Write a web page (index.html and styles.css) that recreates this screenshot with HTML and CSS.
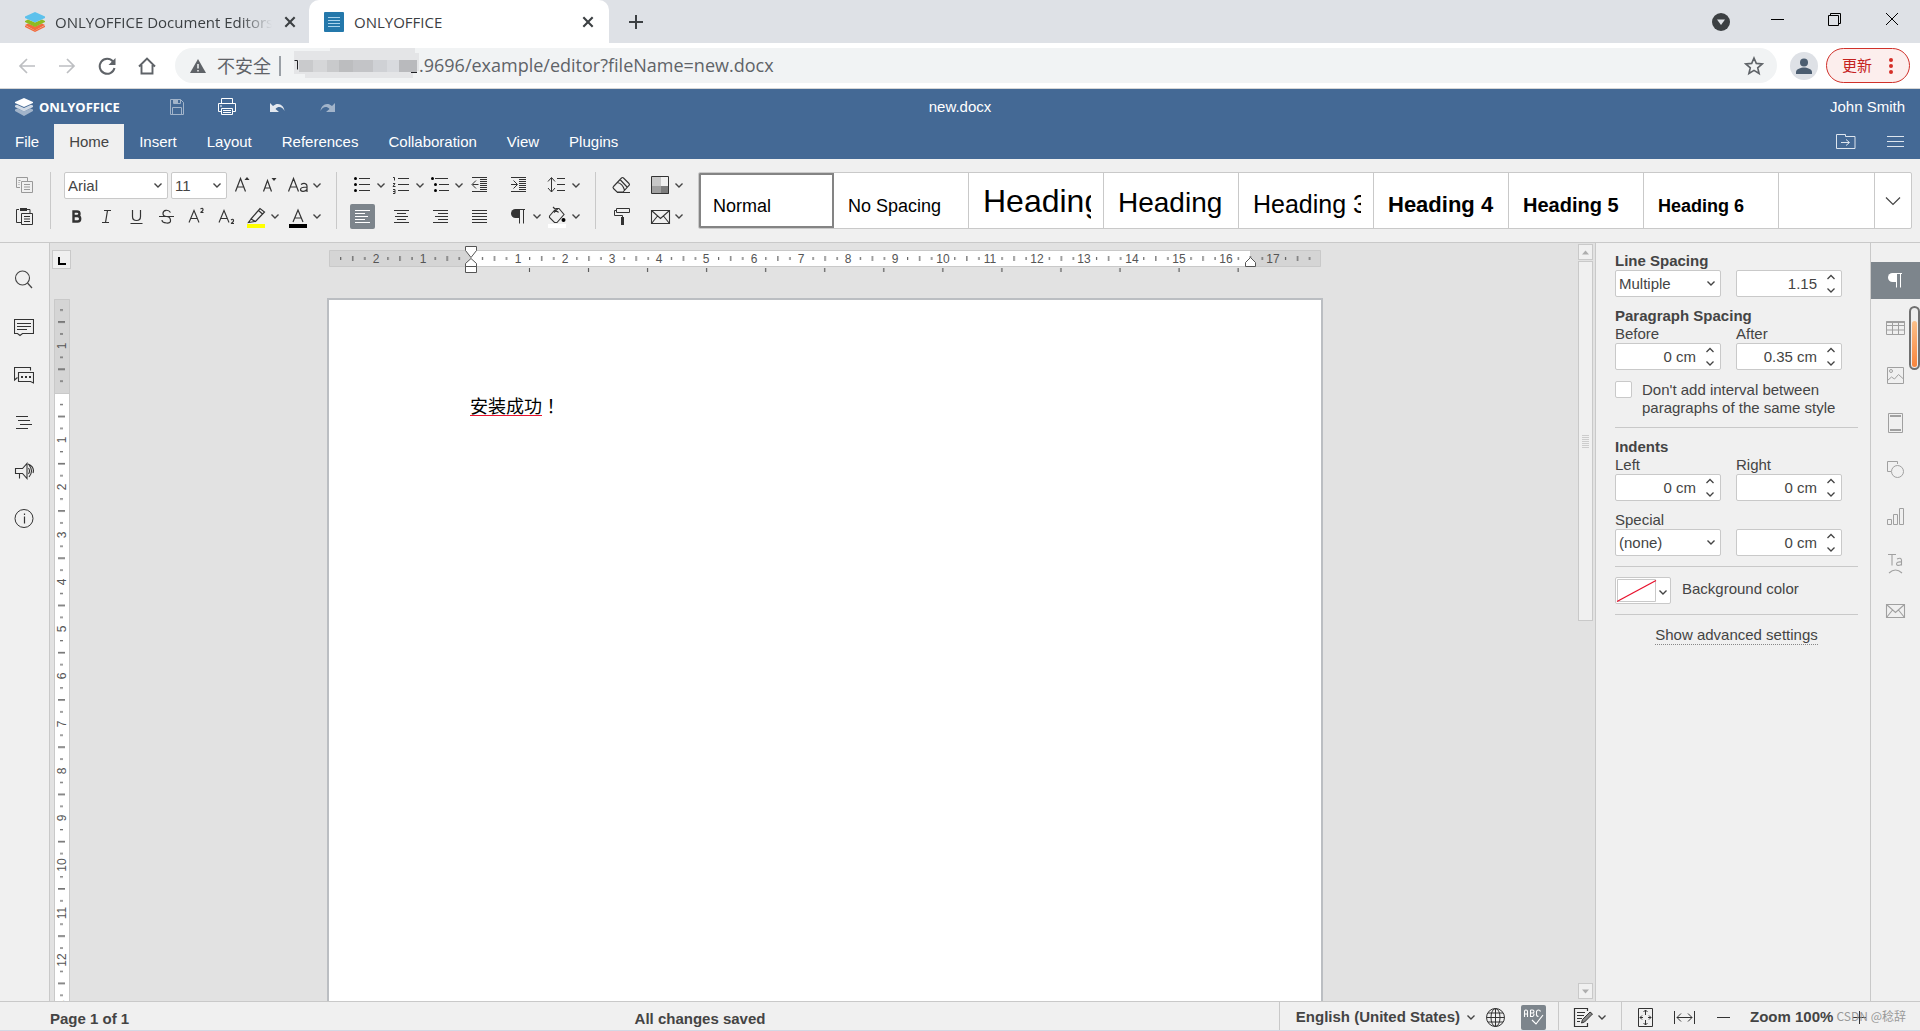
FILE: index.html
```html
<!DOCTYPE html>
<html lang="en">
<head>
<meta charset="utf-8">
<title>ONLYOFFICE</title>
<link rel="stylesheet" href="styles.css">
</head>
<body>
<svg class="sprite" aria-hidden="true">
  <symbol id="chev" viewBox="0 0 12 25"><path d="M2.500 10.500 6 14l3.500-3.500" fill="none" stroke="#444" stroke-width="1.400"/></symbol>
  <symbol id="up" viewBox="0 0 12 10"><path d="M2.500 7 6 3.500 9.500 7" fill="none" stroke="#444" stroke-width="1.300"/></symbol>
  <symbol id="down" viewBox="0 0 12 10"><path d="M2.500 3.500 6 7l3.500-3.500" fill="none" stroke="#444" stroke-width="1.300"/></symbol>
  <symbol id="close" viewBox="0 0 12 12"><path d="M2 2l8 8M10 2l-8 8" stroke="#3c4043" stroke-width="1.800"/></symbol>
  <symbol id="mail" viewBox="0 0 25 25"><path d="M3.500 6.500h18v13h-18zM3.500 6.500l9 8 9-8M3.500 19.500l6-7.500M21.500 19.500l-6-7.500" fill="none" stroke="currentColor" stroke-width="1.100"/></symbol>
  <symbol id="pilcrow" viewBox="0 0 25 25"><path d="M13 5h-3.500a4.500 4.500 0 0 0 0 9H13z" fill="currentColor"/><path d="M13.500 5.500v14M17.500 5.500v14M12 5.500h7" fill="none" stroke="currentColor"/></symbol>
</svg>

<header class="tabstrip">
  <div class="tab">
    <svg class="favicon" viewBox="0 0 20 20"><path d="M0 13.500 10 18.500 20 13.500v1.500L10 20 0 15z" fill="#f26b3c"/><path d="M0 13l3-1.500 7 3 7-3 3 1.500-10 5.500z" fill="#f26b3c"/><path d="M0 9l3-1.500 7 3 7-3L20 9v1l-10 5L0 10z" fill="#8fbb21"/><path d="M0 4.500 10 0l10 4.500v1.500l-10 4.500L0 6z" fill="#5dc1ec"/></svg>
    <span class="tab-title fade">ONLYOFFICE Document Editors</span>
    <button class="tab-close" aria-label="Close tab"><svg viewBox="0 0 12 12"><use href="#close"/></svg></button>
  </div>
  <div class="tab active">
    <svg class="favicon" viewBox="0 0 20 20"><rect width="20" height="20" rx="1" fill="#2478ab"/><path d="M4 5.500h12M4 8.500h12M4 11.500h12M4 14.500h12" stroke="#a9d3ec"/></svg>
    <span class="tab-title">ONLYOFFICE</span>
    <button class="tab-close" aria-label="Close tab"><svg viewBox="0 0 12 12"><use href="#close"/></svg></button>
  </div>
  <button class="new-tab" aria-label="New tab"><svg viewBox="0 0 16 16"><path d="M8 1v14M1 8h14" stroke="#3c4043" stroke-width="2"/></svg></button>
  <div class="window-controls">
    <button aria-label="Search tabs"><svg viewBox="0 0 18 18"><circle cx="9" cy="9" r="9" fill="#3c4043"/><path d="M5 6.500h8L9 12z" fill="#dee1e6"/></svg></button>
    <button aria-label="Minimize"><svg viewBox="0 0 18 18"><path d="M2 6.500h13" stroke="#000"/></svg></button>
    <button aria-label="Restore"><svg viewBox="0 0 18 18"><path d="M2.500 2.500h10v10h-10zM4.500 2.500v-2h10v10h-2" fill="none" stroke="#000"/></svg></button>
    <button aria-label="Close window"><svg viewBox="0 0 18 18"><path d="M3 0l12 12M15 0 3 12" stroke="#000"/></svg></button>
  </div>
</header>

<nav class="addressbar">
  <button class="nav-btn off" aria-label="Back"><svg viewBox="0 0 20 20"><path d="M18 10H3M10 3l-7 7 7 7" fill="none" stroke="currentColor" stroke-width="1.700"/></svg></button>
  <button class="nav-btn off" aria-label="Forward"><svg viewBox="0 0 20 20"><path d="M2 10h15M10 3l7 7-7 7" fill="none" stroke="currentColor" stroke-width="1.700"/></svg></button>
  <button class="nav-btn" aria-label="Reload"><svg viewBox="0 0 20 20"><path d="M16 5.500a7.500 7.500 0 1 0 1.500 6.500" fill="none" stroke="currentColor" stroke-width="2"/><path d="M18.500 2v7h-7z" fill="currentColor"/></svg></button>
  <button class="nav-btn" aria-label="Home"><svg viewBox="0 0 20 20"><path d="M2 10.500 10 2.500l8 8M4.500 9v8.500h11V9" fill="none" stroke="currentColor" stroke-width="1.900"/></svg></button>
  <div class="omnibox">
    <svg class="warn" viewBox="0 0 16 16"><path d="M8 1l8 14H0z" fill="#5f6368"/><path d="M8 6v4.500M8 12v1.500" stroke="#f1f3f4" stroke-width="1.500"/></svg>
    <span class="insecure">不安全</span>
    <span class="bar"></span>
    <svg class="mosaic" viewBox="0 0 126 36" aria-hidden="true">
      <path d="M1 3h36V0h85v5h4v18h-6v7H12v-4H1z" fill="#e4e5e7"/>
      <path d="M6 12h14v12H6zM34 12h12v12H34z" fill="#c9cacc"/><path d="M20 12h14v12H20z" fill="#d5d6d8"/><path d="M46 12h14v12H46z" fill="#bcbdbf"/><path d="M60 12h20v12H60z" fill="#c3c4c7"/><path d="M80 12h14v12H80z" fill="#cfd1d5"/><path d="M94 12h12v12H94z" fill="#d8dade"/><path d="M106 12h18v12h-18z" fill="#b9babd"/>
      <path d="M1.500 12.500h3v9" fill="none" stroke="#202124"/><path d="M118 24.500h6" stroke="#202124"/>
    </svg>
    <input class="url" aria-label="Address" value=".9696/example/editor?fileName=new.docx">
    <svg class="star" viewBox="0 0 20 20"><path d="M10 2l2.300 5.400 5.900.500-4.500 3.900 1.400 5.700L10 14.400l-5.100 3.100 1.400-5.700-4.500-3.900 5.900-.500z" fill="none" stroke="#5f6368" stroke-width="1.600"/></svg>
  </div>
  <button class="avatar" aria-label="Profile"><svg viewBox="0 0 28 28"><circle cx="14" cy="14" r="14" fill="#dee1e6"/><circle cx="14" cy="10.500" r="4" fill="#4b5d70"/><path d="M6 22v-2c0-3 5-4.500 8-4.500s8 1.500 8 4.500v2z" fill="#4b5d70"/></svg></button>
  <button class="update">更新<svg viewBox="0 0 6 18"><circle cx="3" cy="3" r="2" fill="#d52f27"/><circle cx="3" cy="9" r="2" fill="#d52f27"/><circle cx="3" cy="15" r="2" fill="#d52f27"/></svg></button>
</nav>

<header class="app-header">
  <div class="title-row">
    <div class="brand"><svg viewBox="0 0 18 18"><path d="M0 11.500l2.500-1L9 13.500l6.500-3 2.500 1v1.500L9 18l-9-5z" fill="#fff" opacity=".5"/><path d="M0 7.500l2-.8 7 3.300 7-3.300 2 .8V9l-9 4.500L0 9z" fill="#fff" opacity=".75"/><path d="M0 4 9 0l9 4v1L9 9 0 5z" fill="#fff"/></svg><span>ONLYOFFICE</span></div>
    <div class="quick">
      <button aria-label="Save" class="dim"><svg viewBox="0 0 20 20"><path d="M3.500 2.500h10l3 3v12h-13zM6.500 2.500v4h7v-4M5.500 17.500v-7h9v7" fill="none" stroke="#fff"/><path d="M7 2h4v4H7z" fill="#fff"/></svg></button>
      <button aria-label="Print"><svg viewBox="0 0 20 20"><path d="M4.500 6V1.500h11V6M4.500 14.500h-3v-8h17v8h-3M4.500 11.500h11v6h-11zM6 13.500h8M6 15.500h8M3 9h2" fill="none" stroke="#fff"/></svg></button>
      <button aria-label="Undo"><svg viewBox="0 0 20 20"><path d="M3 6v9h9L8.500 12c3-3.500 7-2 9 2C17 8 11 4.500 6 9z" fill="#fff" opacity=".85"/></svg></button>
      <button aria-label="Redo" class="dim"><svg viewBox="0 0 20 20"><path d="M18 6v9H9l3.500-3c-3-3.500-7-2-9 2C4 8 10 4.500 15 9z" fill="#fff"/></svg></button>
    </div>
    <div class="doc-title">new.docx</div>
    <div class="user">John Smith</div>
  </div>
  <div class="menu-row">
    <button>File</button><button class="on">Home</button><button>Insert</button><button>Layout</button><button>References</button><button>Collaboration</button><button>View</button><button>Plugins</button>
    <div class="menu-end">
      <button aria-label="Open file location"><svg viewBox="0 0 20 16"><path d="M.5.500h9v2h9.500v12H.500zM5 8.500h8M10 5.500l3.500 3-3.500 3" fill="none" stroke="#dde5ee"/></svg></button>
      <button aria-label="View settings"><svg viewBox="0 0 20 16"><path d="M1 2.500h17M1 7.500h17M1 12.500h17" stroke="#dde5ee"/></svg></button>
    </div>
  </div>
</header>

<section class="ribbon">
  <div class="group">
    <div class="row"><button class="ib pale" aria-label="Copy"><svg viewBox="0 0 25 25"><path d="M8 14.500H4.500v-10h11V8M6.500 7.500h2M6.500 9.500h1M6.500 11.500h1" fill="none" stroke="currentColor"/><path d="M9.500 8.500h11v11h-11zM12 11.500h6M12 14h6M12 16.500h6" fill="none" stroke="currentColor"/></svg></button></div>
    <div class="row"><button class="ib" aria-label="Paste"><svg viewBox="0 0 25 25"><path d="M9 18.500H4.500v-13H7M15 5.500h3V9M9.500 9.500h11v11h-11zM12 12.500h6M12 15h6M12 17.500h6" fill="none" stroke="currentColor"/><path d="M8 4h7v3H8z" fill="currentColor"/></svg></button></div>
  </div>
  <i class="sep"></i>
  <div class="group">
    <div class="row fonts">
      <div class="combo family"><select aria-label="Font"><option>Arial</option></select><svg viewBox="0 0 12 25"><use href="#chev"/></svg></div>
      <div class="combo size"><select aria-label="Font size"><option>11</option></select><svg viewBox="0 0 12 25"><use href="#chev"/></svg></div>
      <button class="ib" aria-label="Increase font size"><svg viewBox="0 0 25 25"><path d="M5.500 18.500l5-13 5 13M7.300 14h6.400" fill="none" stroke="currentColor" stroke-width="1.200"/><path d="M14.500 7h5L17 4z" fill="currentColor"/></svg></button>
      <button class="ib" aria-label="Decrease font size"><svg viewBox="0 0 25 25"><path d="M5.500 18.500l4-11 4 11M7 15h5" fill="none" stroke="currentColor" stroke-width="1.200"/><path d="M13.500 5h5L16 8z" fill="currentColor"/></svg></button>
      <button class="ib split" aria-label="Change case"><svg viewBox="0 0 25 25"><path d="M2.500 18.500l5-13 5 13M4.300 14h6.400M15 11.500c3-2 6-1 6 1.500v6M21 14c-4 0-6.500.5-6.500 2.500s4 3 6.500 0" fill="none" stroke="currentColor" stroke-width="1.200"/></svg><svg class="cv" viewBox="0 0 12 25"><use href="#chev"/></svg></button>
    </div>
    <div class="row styles-row">
      <button class="ib" aria-label="Bold"><svg viewBox="0 0 25 25"><path d="M9.500 7.500h3.500q2.500 0 2.500 2.200T13 12H9.500zM9.500 12h4q2.700 0 2.700 2.700t-2.700 2.800h-4z" fill="none" stroke="currentColor" stroke-width="2.400"/></svg></button>
      <button class="ib" aria-label="Italic"><svg viewBox="0 0 25 25"><path d="M10 6.500h7M8 18.500h7M13.500 6.500l-2 12" fill="none" stroke="currentColor" stroke-width="1.200"/></svg></button>
      <button class="ib" aria-label="Underline"><svg viewBox="0 0 25 25"><path d="M8.500 6v6.500q0 4 4 4t4-4V6M6.500 19.500h12" fill="none" stroke="currentColor" stroke-width="1.200"/></svg></button>
      <button class="ib" aria-label="Strikethrough"><svg viewBox="0 0 25 25"><path d="M16.500 8.500Q15 6 12 6.300T9 9.500t3.500 3 4 3.500-4 3-4.500-3M5 12.500h15" fill="none" stroke="currentColor" stroke-width="1.200"/></svg></button>
      <button class="ib" aria-label="Superscript"><svg viewBox="0 0 25 25"><path d="M5 18.500l5-12 5 12M6.800 14.500h6.400M16.500 5q2-1.500 2.500.2T16.500 8.500h3" fill="none" stroke="currentColor" stroke-width="1.100"/></svg></button>
      <button class="ib" aria-label="Subscript"><svg viewBox="0 0 25 25"><path d="M5 18.500l5-12 5 12M6.800 14.500h6.400M17 16q2-1.500 2.500.2T17 19.500h3" fill="none" stroke="currentColor" stroke-width="1.100"/></svg></button>
      <button class="ib split" aria-label="Highlight color"><svg viewBox="0 0 25 25"><path d="M7 15L16 4.500l4.500 3.500-9 9.500zM7 15l-2.500 3.500 6.500-1M14.500 6.500l4 3.500" fill="none" stroke="currentColor" stroke-width="1.200"/><path d="M3 20h18v4H3z" fill="#ff0"/></svg><svg class="cv" viewBox="0 0 12 25"><use href="#chev"/></svg></button>
      <button class="ib split" aria-label="Font color"><svg viewBox="0 0 25 25"><path d="M7 18l5-12 5 12M8.800 14h6.400" fill="none" stroke="currentColor" stroke-width="1.200"/><path d="M3 20h18v4H3z" fill="#000"/></svg><svg class="cv" viewBox="0 0 12 25"><use href="#chev"/></svg></button>
    </div>
  </div>
  <i class="sep"></i>
  <div class="group">
    <div class="row cells">
      <button class="ib split" aria-label="Bullets"><svg viewBox="0 0 25 25"><path d="M9 5.500h11M9 11.500h11M9 17.500h11" stroke="currentColor"/><circle cx="5.500" cy="5.500" r="1.500"/><circle cx="5.500" cy="11.500" r="1.500"/><circle cx="5.500" cy="17.500" r="1.500"/></svg><svg class="cv" viewBox="0 0 12 25"><use href="#chev"/></svg></button>
      <button class="ib split" aria-label="Numbering"><svg viewBox="0 0 25 25"><path d="M9 5.500h11M9 11.500h11M9 17.500h11M4 4.500h1.500v3M4 10.500h2l-2 3h2.500M4 16.500h2v4H4M4 18.500h2" fill="none" stroke="currentColor"/></svg><svg class="cv" viewBox="0 0 12 25"><use href="#chev"/></svg></button>
      <button class="ib split" aria-label="Multilevel list"><svg viewBox="0 0 25 25"><path d="M7 5.500h13M11 11.500h10M11 17.500h10" stroke="currentColor"/><circle cx="4.500" cy="5.500" r="1.500"/><circle cx="7.500" cy="11.500" r="1.500"/><circle cx="7.500" cy="17.500" r="1.500"/></svg><svg class="cv" viewBox="0 0 12 25"><use href="#chev"/></svg></button>
      <button class="ib" aria-label="Decrease indent"><svg viewBox="0 0 25 25"><path d="M5 4.500h15M13 6.500h7M13 8.500h7M13 10.500h7M13 12.500h7M13 14.500h7M13 16.500h7M5 18.500h15M5.500 11.500h6M9 7.500l-4 4 4 4" fill="none" stroke="currentColor"/></svg></button>
      <button class="ib" aria-label="Increase indent"><svg viewBox="0 0 25 25"><path d="M5 4.500h15M13 6.500h7M13 8.500h7M13 10.500h7M13 12.500h7M13 14.500h7M13 16.500h7M5 18.500h15M5 11.500h6M7.500 7.500l4 4-4 4" fill="none" stroke="currentColor"/></svg></button>
      <button class="ib split" aria-label="Line spacing"><svg viewBox="0 0 25 25"><path d="M12 5.500h8M12 11.500h8M12 17.500h8M6.500 5v14M3 8.500l3.500-4 3.500 4M3 15l3.500 4 3.500-4" fill="none" stroke="currentColor"/></svg><svg class="cv" viewBox="0 0 12 25"><use href="#chev"/></svg></button>
    </div>
    <div class="row cells">
      <button class="ib on" aria-label="Align left"><svg viewBox="0 0 25 25"><path d="M5 6.500h15M5 9.500h10M5 12.500h13M5 15.500h10M5 18.500h15" stroke="currentColor"/></svg></button>
      <button class="ib" aria-label="Align center"><svg viewBox="0 0 25 25"><path d="M5 6.500h15M8 9.500h9M6 12.500h13M8 15.500h9M5 18.500h15" stroke="currentColor"/></svg></button>
      <button class="ib" aria-label="Align right"><svg viewBox="0 0 25 25"><path d="M5 6.500h15M10 9.500h10M7 12.500h13M10 15.500h10M5 18.500h15" stroke="currentColor"/></svg></button>
      <button class="ib" aria-label="Justify"><svg viewBox="0 0 25 25"><path d="M5 6.500h15M5 9.500h15M5 12.500h15M5 15.500h15M5 18.500h15" stroke="currentColor"/></svg></button>
      <button class="ib split" aria-label="Nonprinting characters"><svg viewBox="0 0 25 25"><use href="#pilcrow"/></svg><svg class="cv" viewBox="0 0 12 25"><use href="#chev"/></svg></button>
      <button class="ib split" aria-label="Shading"><svg viewBox="0 0 25 25"><path d="M4.500 12L11 4.500h3l5 6-7 8H9.500l-5-5zM8 3l5.500 5.500M13 4.500l-4 4" fill="none" stroke="currentColor" stroke-width="1.100"/><circle cx="18.500" cy="16" r="2"/><path d="M3 20h18v4H3z" fill="#fff"/></svg><svg class="cv" viewBox="0 0 12 25"><use href="#chev"/></svg></button>
    </div>
  </div>
  <i class="sep"></i>
  <div class="group">
    <div class="row cells">
      <button class="ib" aria-label="Clear style"><svg viewBox="0 0 25 25"><path d="M4.500 15.500q-1-1 0-2l8-8.500q1-1 2 0l5.500 5.500q1 1 0 2L14 19H8zM11 6.500l7.500 8M8.500 9.500q5 1 7 7.500M8 19.500h13" fill="none" stroke="currentColor" stroke-width="1.100"/></svg></button>
      <button class="ib split" aria-label="Color scheme"><svg viewBox="0 0 25 25"><path d="M4 4h9v9H4z" fill="#c8c8c8"/><path d="M13 4h8v9h-8z" fill="#f0f0f0"/><path d="M4 13h9v8H4z" fill="#a0a0a0"/><path d="M13 13h8v8h-8z" fill="#7d7d7d"/><path d="M3.500 3.500h17v17h-17z" fill="none" stroke="#333"/></svg><svg class="cv" viewBox="0 0 12 25"><use href="#chev"/></svg></button>
    </div>
    <div class="row cells">
      <button class="ib" aria-label="Copy style"><svg viewBox="0 0 25 25"><path d="M7.500 4.500h13v4h-13zM7 6.500H5.500v5h8v3" fill="none" stroke="currentColor"/><path d="M12 13h3v8h-3z" fill="currentColor"/></svg></button>
      <button class="ib split" aria-label="Mail merge"><svg viewBox="0 0 25 25"><use href="#mail"/></svg><svg class="cv" viewBox="0 0 12 25"><use href="#chev"/></svg></button>
    </div>
  </div>
  <div class="gallery">
    <button class="style sel">Normal</button>
    <button class="style">No Spacing</button>
    <button class="style h1"><span>Heading 1</span></button>
    <button class="style h2"><span>Heading 2</span></button>
    <button class="style h3"><span>Heading 3</span></button>
    <button class="style h4">Heading 4</button>
    <button class="style h5">Heading 5</button>
    <button class="style h6">Heading 6</button>
    <span class="blank"></span>
    <button class="more" aria-label="More styles"><svg viewBox="0 0 16 16"><path d="M1 4.500 8 11.500l7-7" fill="none" stroke="#444" stroke-width="1.200"/></svg></button>
  </div>
</section>

<main class="workspace">
  <aside class="leftbar">
    <button aria-label="Find"><svg viewBox="0 0 20 20"><circle cx="8.500" cy="9" r="7" fill="none" stroke="#444" stroke-width="1.100"/><path d="M13.500 14l4.500 5" stroke="#444" stroke-width="1.200"/></svg></button>
    <button aria-label="Comments"><svg viewBox="0 0 20 20"><path d="M.5 2.500h19v14H8.500l-2.500 2-2.500-2H.500zM3 6.500h14M3 9.500h14M3 12.500h10" fill="none" stroke="#333" stroke-width="1.100"/></svg></button>
    <button aria-label="Chat"><svg viewBox="0 0 20 20"><path d="M3.500 12.500L.5 15V2.500h16v3M4.500 7.500h15V18l-3-1.500h-12z" fill="none" stroke="#333" stroke-width="1.100"/><path d="M7 11h2v2H7zM11 11h2v2h-2zM15 11h2v2h-2z" fill="#333"/></svg></button>
    <button aria-label="Navigation"><svg viewBox="0 0 20 20"><path d="M2 3.500h12M4 7.500h12M6 11.500h12M2 15.500h12" stroke="#333"/></svg></button>
    <button aria-label="Feedback"><svg viewBox="0 0 20 20"><path d="M1.500 7.500h7l4.500-5v15l-4.500-5h-7zM5.500 13v4.500M14.500 7q2 3 0 6M15 4q5 6 0 12M14 3q7 3 5 9" fill="none" stroke="#333" stroke-width="1.100"/></svg></button>
    <button aria-label="About"><svg viewBox="0 0 20 20"><circle cx="10" cy="9.500" r="9" fill="none" stroke="#333"/><path d="M10.500 7.500v7M10.500 4.500V6" stroke="#333" stroke-width="1.200"/></svg></button>
  </aside>

  <section class="editor">
    <button class="tabstop" aria-label="Tab stop"><svg viewBox="0 0 17 17"><path d="M6 6v7h7" fill="none" stroke="#000" stroke-width="2"/></svg></button>
    <div class="hruler">
      <svg viewBox="0 0 994 30" width="994" height="30">
        <defs><pattern id="ticks" x="143" y="0" width="47.240" height="16" patternUnits="userSpaceOnUse"><path d="M11.500 7v3M35.500 7v3M23.500 6v5" stroke="#444"/></pattern>
        <pattern id="stops" x="143" y="0" width="59.050" height="5" patternUnits="userSpaceOnUse"><path d="M58.500 0v4" stroke="#444"/></pattern></defs>
        <path d="M1.500 7.500h991v16h-991z" fill="#d5d5d5" stroke="#c9c9c9"/>
        <path d="M143 8h779v15H143z" fill="#fff"/>
        <rect width="978" height="16" fill="url(#ticks)" transform="translate(0 7)" x="6"/>
        <rect x="150" width="765" height="5" fill="url(#stops)" transform="translate(0 25)"/>
        <g class="num"><text x="48" y="20">2</text><text x="95" y="20">1</text><text x="190" y="20">1</text><text x="237" y="20">2</text><text x="284" y="20">3</text><text x="331" y="20">4</text><text x="378" y="20">5</text><text x="426" y="20">6</text><text x="473" y="20">7</text><text x="520" y="20">8</text><text x="567" y="20">9</text><text x="615" y="20">10</text><text x="662" y="20">11</text><text x="709" y="20">12</text><text x="756" y="20">13</text><text x="804" y="20">14</text><text x="851" y="20">15</text><text x="898" y="20">16</text><text x="945" y="20">17</text></g>
        <path d="M137.500 3.500h11v4l-5.500 7-5.500-7zM137.500 23.500v-3l5.500-5 5.500 5v3zM137.500 23.500h11v6h-11z" fill="#fff" stroke="#555"/>
        <path d="M917.500 23.500v-4l5-5 5 5v4z" fill="#fff" stroke="#555"/>
      </svg>
    </div>
    <div class="vruler">
      <svg width="16" height="1400" viewBox="0 0 16 1400">
        <defs><pattern id="vticks" x="0" y="94" width="16" height="47.240" patternUnits="userSpaceOnUse"><path d="M6 11.500h3M6 35.500h3M4 23.500h7" stroke="#444"/></pattern></defs>
        <path d="M.5.500h15v1399H.500z" fill="#fff" stroke="#c9c9c9"/><path d="M.5.500h15v94H.500z" fill="#d5d5d5" stroke="#c9c9c9"/>
        <rect y="4" width="16" height="1390" fill="url(#vticks)"/>
        <g class="num" transform="translate(12 94) rotate(-90)"><text x="47">1</text><text x="-47">1</text><text x="-94">2</text><text x="-142">3</text><text x="-189">4</text><text x="-236">5</text><text x="-283">6</text><text x="-331">7</text><text x="-378">8</text><text x="-425">9</text><text x="-472">10</text><text x="-520">11</text><text x="-567">12</text><text x="-614">13</text><text x="-661">14</text></g>
      </svg>
    </div>
    <article class="page" lang="zh"><p><span class="misspelt">安装成功</span>！</p></article>
    <div class="scroll">
      <button aria-label="Scroll up"><svg viewBox="0 0 15 15"><path d="M4 9.500h7l-3.500-4z" fill="#adadad"/></svg></button>
      <div class="thumb"><svg viewBox="0 0 7 15"><path d="M0 1.500h7M0 3.500h7M0 5.500h7M0 7.500h7M0 9.500h7M0 11.500h7M0 13.500h7" stroke="#ccc"/></svg></div>
      <button aria-label="Scroll down"><svg viewBox="0 0 15 15"><path d="M4 5.500h7l-3.500 4z" fill="#adadad"/></svg></button>
    </div>
  </section>

  <aside class="panel">
    <h2>Line Spacing</h2>
    <div class="pair">
      <div class="combo"><select aria-label="Line spacing rule"><option>Multiple</option></select><svg viewBox="0 0 12 25"><use href="#chev"/></svg></div>
      <div class="spin"><input aria-label="Line spacing value" value="1.15"><span><button aria-label="Increase"><svg viewBox="0 0 12 10"><use href="#up"/></svg></button><button aria-label="Decrease"><svg viewBox="0 0 12 10"><use href="#down"/></svg></button></span></div>
    </div>
    <h2 class="gap">Paragraph Spacing</h2>
    <div class="pair"><label for="before">Before</label><label for="after">After</label>
      <div class="spin"><input id="before" value="0 cm"><span><button aria-label="Increase"><svg viewBox="0 0 12 10"><use href="#up"/></svg></button><button aria-label="Decrease"><svg viewBox="0 0 12 10"><use href="#down"/></svg></button></span></div>
      <div class="spin"><input id="after" value="0.35 cm"><span><button aria-label="Increase"><svg viewBox="0 0 12 10"><use href="#up"/></svg></button><button aria-label="Decrease"><svg viewBox="0 0 12 10"><use href="#down"/></svg></button></span></div>
    </div>
    <label class="check"><input type="checkbox"><span>Don't add interval between paragraphs of the same style</span></label>
    <hr>
    <h2>Indents</h2>
    <div class="pair"><label for="left">Left</label><label for="right">Right</label>
      <div class="spin"><input id="left" value="0 cm"><span><button aria-label="Increase"><svg viewBox="0 0 12 10"><use href="#up"/></svg></button><button aria-label="Decrease"><svg viewBox="0 0 12 10"><use href="#down"/></svg></button></span></div>
      <div class="spin"><input id="right" value="0 cm"><span><button aria-label="Increase"><svg viewBox="0 0 12 10"><use href="#up"/></svg></button><button aria-label="Decrease"><svg viewBox="0 0 12 10"><use href="#down"/></svg></button></span></div>
    </div>
    <div class="pair special"><label class="wide" for="special">Special</label>
      <div class="combo"><select id="special"><option>(none)</option></select><svg viewBox="0 0 12 25"><use href="#chev"/></svg></div>
      <div class="spin"><input aria-label="Special indent value" value="0 cm"><span><button aria-label="Increase"><svg viewBox="0 0 12 10"><use href="#up"/></svg></button><button aria-label="Decrease"><svg viewBox="0 0 12 10"><use href="#down"/></svg></button></span></div>
    </div>
    <hr>
    <div class="bg"><button id="bgcolor" aria-label="Background color"><svg viewBox="0 0 54 25"><path d="M1.500 1.500h38v22h-38z" fill="#fff" stroke="#c9c9c9"/><path d="M1 23.500l39-21" stroke="#e8112d" stroke-width="1.300"/><path d="M43.500 12.500 47 16l3.500-3.500" fill="none" stroke="#444" stroke-width="1.400"/></svg></button><label for="bgcolor">Background color</label></div>
    <hr>
    <a class="advanced" href="#">Show advanced settings</a>
  </aside>

  <aside class="rightbar">
    <button class="on" aria-label="Paragraph settings"><svg viewBox="0 0 25 25"><use href="#pilcrow"/></svg></button>
    <button aria-label="Table settings"><svg viewBox="0 0 25 25"><path d="M3.500 5.500h18v13h-18zM3.500 9.500h18M3.500 14h18M9.500 5.500v13M15.500 5.500v13" fill="none" stroke="currentColor"/><path d="M3.500 6h18" stroke="currentColor" stroke-width="2"/></svg></button>
    <button aria-label="Image settings"><svg viewBox="0 0 25 25"><path d="M4.500 4.500h16v16h-16zM4.500 17.500l4-3.500 3 2 4-4.500 5 4.500" fill="none" stroke="currentColor"/><circle cx="8" cy="8" r="1.500" fill="none" stroke="currentColor"/></svg></button>
    <button aria-label="Header and footer settings"><svg viewBox="0 0 25 25"><path d="M5.500 3.500h14v19h-14z" fill="none" stroke="currentColor"/><path d="M7 6h11M7 20h11" stroke="currentColor" stroke-width="2"/></svg></button>
    <button aria-label="Shape settings"><svg viewBox="0 0 25 25"><path d="M8 14.500H4.500v-10h10V7" fill="none" stroke="currentColor"/><circle cx="14.500" cy="14.500" r="6" fill="none" stroke="currentColor"/></svg></button>
    <button aria-label="Chart settings"><svg viewBox="0 0 25 25"><path d="M4.500 15.500h4v5h-4zM10.500 10.500h4v10h-4zM16.500 4.500h4v16h-4z" fill="none" stroke="currentColor"/></svg></button>
    <button aria-label="Text art settings"><svg viewBox="0 0 25 25"><path d="M5 3.500h8M9 3.500v11M14 8q4-2 4.500 1v5.500M18.500 11q-5-.5-5 2t5 .5M6 22q6.500-6 13 0" fill="none" stroke="currentColor" stroke-width="1.100"/></svg></button>
    <button aria-label="Mail merge settings"><svg viewBox="0 0 25 25"><use href="#mail"/></svg></button>
    <div class="gauge"><i></i></div>
  </aside>
</main>

<footer class="status">
  <span class="pages">Page 1 of 1</span>
  <span class="saved">All changes saved</span>
  <div class="cell lang"><button>English (United States)<svg class="cv" viewBox="0 0 12 25"><use href="#chev"/></svg></button>
    <button class="ib" aria-label="Document language"><svg viewBox="0 0 25 25"><circle cx="12.500" cy="12.500" r="9" fill="none" stroke="#333"/><ellipse cx="12.500" cy="12.500" rx="4.500" ry="9" fill="none" stroke="#333"/><path d="M12.500 3.500v18M3.500 12.500h18M5 8h15M5 17h15" stroke="#333"/></svg></button>
    <button class="ib on" aria-label="Spell checking"><svg viewBox="0 0 25 25"><path d="M3.500 12V6.500q0-1.500 1.500-1.500t1.500 1.500V12M3.500 9h3M9.500 5v6.500h2q1.500-.5 1.500-2t-1.500-1.500h-2M9.500 5h2q1.500 0 1.500 1.500T11.500 8M19.500 6.500Q19 5 17.500 5t-2 1.500v3.500q.5 1.500 2 1.500M11 15l4 4 7-9" fill="none" stroke="#fff" stroke-width="1.100"/></svg></button></div>
  <div class="cell"><button class="ib split" aria-label="Track changes"><svg viewBox="0 0 25 25"><path d="M16.500 6V3.500h-13v18h13V18M6 7.500h8M6 10.500h7M6 13.500h5M6 16.500h3" fill="none" stroke="#333" stroke-width="1.200"/><path d="M10.500 18l1-3.500L19 7l2.500 2-8 8z" fill="#888" stroke="#333"/></svg><svg class="cv" viewBox="0 0 12 25"><use href="#chev"/></svg></button></div>
  <div class="cell zoom">
    <button class="ib" aria-label="Fit to page"><svg viewBox="0 0 25 25"><path d="M5.500 3.500h14v18h-14zM12.500 5v5M10.500 7l2-2 2 2M12.500 20v-5M10.500 18l2 2 2-2M7 12.500h3M9 10.500l-2 2 2 2M18 12.500h-3M16 10.500l2 2-2 2" fill="none" stroke="#333"/></svg></button>
    <button class="ib" aria-label="Fit to width"><svg viewBox="0 0 25 25"><path d="M2.500 6v13M22.500 6v13M5 12.500h15M9 8.500l-4 4 4 4M16 8.500l4 4-4 4" fill="none" stroke="#333"/></svg></button>
    <button class="ib" aria-label="Zoom out"><svg viewBox="0 0 25 25"><path d="M6 12.500h13" stroke="#333"/></svg></button>
    <span class="level">Zoom 100%</span>
    <button class="ib" aria-label="Zoom in"><svg viewBox="0 0 25 25"><path d="M6 12.500h13M12.500 6v13" stroke="#333"/></svg></button>
  </div>
  <span class="watermark">CSDN @稔辞</span>
</footer>
</body>
</html>
```
FILE: styles.css
```css
* { box-sizing: border-box; }
html, body { height: 100%; }
body {
  margin: 0;
  display: flex;
  flex-direction: column;
  overflow: hidden;
  background: #f0f0f0;
  color: #444;
  font: 15px/18px "Liberation Sans", Arial, "Noto Sans CJK SC", sans-serif;
}
button, input, select { font: inherit; color: inherit; margin: 0; padding: 0; border: 0; background: none; }
button { display: flex; align-items: center; justify-content: center; }
svg { display: block; flex: none; }
.sprite { position: absolute; width: 0; height: 0; }

/* Browser frame */
.tabstrip { display: flex; flex: none; height: 43px; background: #dee1e6; font: 15px/20px "Open Sans", "Noto Sans", sans-serif; }
.tab { display: flex; align-items: center; width: 300px; padding: 0 13px 0 15px; }
.tab:first-child { width: 309px; padding: 0 11px 0 25px; }
.tab.active { background: #fff; border-radius: 10px 10px 0 0; }
.favicon { width: 20px; height: 20px; }
.tab-title { flex: 1; min-width: 0; margin-left: 10px; overflow: hidden; white-space: nowrap; color: #3c4043; }
.fade { -webkit-mask-image: linear-gradient(90deg, #000 85%, transparent); mask-image: linear-gradient(90deg, #000 85%, transparent); }
.tab-close { width: 16px; height: 20px; margin-left: 10px; }
.tab-close svg { width: 14px; height: 14px; }
.new-tab { width: 54px; }
.new-tab svg { width: 16px; height: 16px; }
.window-controls { display: flex; margin-left: auto; }
.window-controls button { width: 57px; }
.window-controls svg { width: 18px; height: 18px; }

.addressbar { display: flex; flex: none; align-items: center; height: 46px; padding: 0 10px 0 7px; background: #fff; border-bottom: 1px solid #d5d5d5; }
.nav-btn { width: 40px; height: 36px; color: #5f6368; }
.nav-btn.off { color: #bdbfc2; }
.nav-btn svg { width: 20px; height: 20px; }
.omnibox { display: flex; flex: 1; align-items: center; height: 35px; margin-left: 8px; padding: 0 13px 0 15px; border-radius: 18px; background: #f1f3f4; color: #5f6368; font: 18px/24px "Open Sans", "Noto Sans CJK SC", sans-serif; }
.warn { width: 16px; height: 16px; }
.insecure { margin-left: 11px; }
.bar { width: 2px; height: 20px; margin: 0 12px 0 8px; background: #9aa0a6; }
.mosaic { width: 126px; height: 36px; }
.url { flex: 1; min-width: 0; padding-bottom: 2px; outline: 0; }
.star { width: 20px; height: 20px; }
.avatar { width: 28px; margin: 0 8px 0 13px; }
.avatar svg { width: 28px; height: 28px; }
.update { gap: 16px; width: 84px; height: 35px; border: 1px solid #d0312a; border-radius: 18px; background: #fceeed; color: #c5221f; }
.update svg { width: 6px; height: 18px; }

/* Application header */
.app-header { flex: none; background: #446995; color: #fff; }
.title-row { display: grid; grid-template-columns: 1fr auto 1fr; grid-template-areas: "left title user"; align-items: center; height: 35px; padding: 0 15px; }
.brand { grid-area: left; display: flex; align-items: center; gap: 6px; font: 700 13px/18px "Open Sans", sans-serif; }
.brand svg { width: 18px; height: 18px; }
.quick { grid-area: left; display: flex; gap: 30px; padding-left: 152px; }
.quick svg { width: 20px; height: 20px; }
.dim { opacity: .5; }
.doc-title { grid-area: title; }
.user { grid-area: user; justify-self: end; }
.menu-row { display: flex; height: 35px; }
.menu-row > button { padding: 0 15px; }
.menu-row > .on { background: #f0f0f0; color: #444; }
.menu-end { display: flex; gap: 30px; margin-left: auto; padding-right: 14px; }
.menu-end svg { width: 20px; height: 16px; }

/* Ribbon */
.ribbon { display: flex; flex: none; height: 84px; padding: 13px 8px 0 12px; border-bottom: 1px solid #c9c9c9; }
.group { display: flex; flex-direction: column; gap: 5px; }
.row { display: flex; height: 25px; }
.row:first-child { height: 27px; align-items: center; }
.sep { flex: none; width: 1px; height: 57px; margin: 0 13px; background: #c9c9c9; }
.ib { height: 25px; color: #333; border-radius: 2px; justify-content: flex-start; }
.ib svg { width: 25px; height: 25px; }
.ib .cv, .cv { width: 12px; height: 25px; }
.ib.on { width: 25px; background: #7d858c; color: #fff; }
.pale { color: #999; }
.fonts { gap: 3px; }
.styles-row { gap: 5px; }
.cells { display: grid; grid-auto-flow: column; grid-auto-columns: 37px; gap: 2px; }
.combo { position: relative; height: 27px; border: 1px solid #c9c9c9; border-radius: 2px; background: #fff; }
.combo select { width: 100%; height: 25px; padding-left: 3px; appearance: none; outline: 0; }
.combo svg { position: absolute; right: 3px; top: 0; width: 12px; height: 25px; pointer-events: none; }
.family { width: 104px; }
.size { width: 56px; }
.gallery { display: flex; flex: 1; height: 57px; margin-left: 13px; border: 1px solid #c9c9c9; border-radius: 2px; background: #fff; color: #000; overflow: hidden; }
.style { flex: none; width: 135px; padding: 22px 12px 0 14px; border-right: 1px solid #c9c9c9; justify-content: flex-start; align-items: flex-start; font-size: 18px; line-height: 22px; white-space: nowrap; }
.style span { overflow: hidden; }
.style.sel { padding: 20px 10px 0 12px; border: 2px solid #848484; }
.style.h1 { padding-top: 10px; font-size: 32px; line-height: 36px; }
.style.h2 { padding-top: 14px; font-size: 28px; line-height: 32px; }
.style.h3 { padding-top: 16px; font-size: 25px; line-height: 30px; }
.style.h4, .style.h5, .style.h6 { font-weight: 700; }
.style.h4 { font-size: 22px; padding-top: 20px; line-height: 24px; }
.style.h5 { font-size: 20px; padding-top: 21px; }
.blank { flex: 1; border-right: 1px solid #c9c9c9; }
.more { width: 36px; }
.more svg { width: 16px; height: 16px; }

/* Workspace */
.workspace { display: flex; flex: 1; min-height: 0; }
.leftbar { display: flex; flex: none; flex-direction: column; gap: 11px; width: 50px; padding: 17px 1px 0 0; border-right: 1px solid #c9c9c9; }
.leftbar button { height: 37px; }
.leftbar svg { width: 20px; height: 20px; }
.editor { display: grid; flex: 1; min-width: 0; grid-template-columns: 23px 1fr 18px; grid-template-rows: 55px minmax(0, 1fr); justify-items: center; background: #e2e2e2; overflow: hidden; }
.tabstop { width: 19px; height: 19px; margin-top: 7px; border: 1px solid #c9c9c9; background: #f0f0f0; }
.tabstop svg { width: 17px; height: 17px; }
.hruler svg { overflow: visible; }
.num { font-size: 12px; fill: #555; text-anchor: middle; }
.vruler { grid-area: 2 / 1; min-height: 0; margin: 1px 0 0 1px; height: 100%; overflow: hidden; }
.page { grid-area: 2 / 2; width: 996px; height: 1406px; padding: 93px 141px; border: 2px solid #bbbec2; background: #fff; color: #000; font-family: "Noto Sans CJK TC", sans-serif; font-size: 18px; line-height: 24px; }
.page p { margin: 0; }
.misspelt { display: inline-block; line-height: 19px; border-bottom: 1px solid #e8112d; }
.scroll { grid-area: 1 / 3 / 3 / 4; display: flex; flex-direction: column; gap: 1px; width: 15px; min-height: 0; margin: 1px 2px 2px 1px; align-self: stretch; }
.scroll button, .thumb { width: 15px; border: 1px solid #c9c9c9; background: #f0f0f0; }
.scroll button { height: 16px; }
.scroll button:last-child { margin-top: auto; }
.scroll button svg { width: 15px; height: 15px; }
.thumb { display: flex; align-items: center; justify-content: center; height: 360px; }
.thumb svg { width: 7px; height: 15px; }

/* Paragraph settings */
.panel { flex: none; width: 276px; padding: 9px 12px 0 19px; border: 1px solid #c9c9c9; border-width: 0 1px; }
.panel h2 { margin: 0; font: inherit; font-weight: 700; }
.panel h2.gap { margin-top: 10px; }
.pair { display: grid; grid-template-columns: 106px 106px; column-gap: 15px; }
.special { margin-top: 10px; }
.wide { grid-column: 1 / 3; }
.spin { display: flex; height: 27px; border: 1px solid #c9c9c9; border-radius: 2px; background: #fff; }
.spin input { flex: 1; min-width: 0; text-align: right; outline: 0; }
.spin span { display: flex; flex-direction: column; justify-content: center; gap: 3px; width: 24px; padding-left: 3px; align-items: center; }
.spin button { width: 12px; height: 10px; }
.spin button svg { width: 12px; height: 10px; }
.check { display: flex; gap: 10px; margin-top: 11px; }
.check input { flex: none; width: 17px; height: 17px; appearance: none; border: 1px solid #c9c9c9; border-radius: 2px; background: #fff; }
.panel hr { height: 1px; margin: 10px 0; border: 0; background: #c9c9c9; }
.bg { display: flex; gap: 11px; }
.bg label { padding-top: 3px; }
.bg button { width: 56px; height: 27px; border: 1px solid #c9c9c9; border-radius: 2px; background: #fff; }
.bg svg { width: 54px; height: 25px; }
.advanced { display: block; width: max-content; margin: 0 auto; color: inherit; text-decoration: none; border-bottom: 1px dotted #888; line-height: 19px; }

.rightbar { position: relative; display: flex; flex: none; flex-direction: column; gap: 10px; width: 49px; padding-top: 19px; color: #a0a0a0; }
.rightbar button { height: 37px; }
.rightbar .on { margin-bottom: 1px; background: #7d858c; color: #fff; }
.rightbar svg { width: 25px; height: 25px; }
.gauge { position: absolute; right: 0; top: 63px; display: flex; align-items: flex-end; width: 11px; height: 64px; padding: 1px; border: 2px solid #707070; border-radius: 6px; background: #eee; }
.gauge i { flex: 1; height: 46px; border-radius: 3px; background: linear-gradient(#fbc08a, #f8843c); }

/* Status bar */
.status { position: relative; display: flex; flex: none; align-items: center; height: 30px; padding-left: 50px; border-top: 1px solid #c9c9c9; border-bottom: 1px solid #d3d8e4; font-weight: 700; }
.pages, .saved { padding-top: 5px; }
.saved { flex: 1; padding-right: 8px; text-align: center; }
.cell { display: flex; align-items: center; height: 28px; padding: 2px 13px 0 12px; border-left: 1px solid #c9c9c9; }
.lang { gap: 6px; padding: 2px 12px 0 16px; }
.lang button:first-child { gap: 5px; }
.lang .on { margin-left: 7px; }
.zoom { gap: 14px; width: 299px; padding: 2px 0 0 11px; }
.zoom .ib { flex: none; }
.watermark { position: absolute; right: 14px; top: 4px; color: #999; font: 12px/20px "Noto Sans CJK SC", sans-serif; }
```
